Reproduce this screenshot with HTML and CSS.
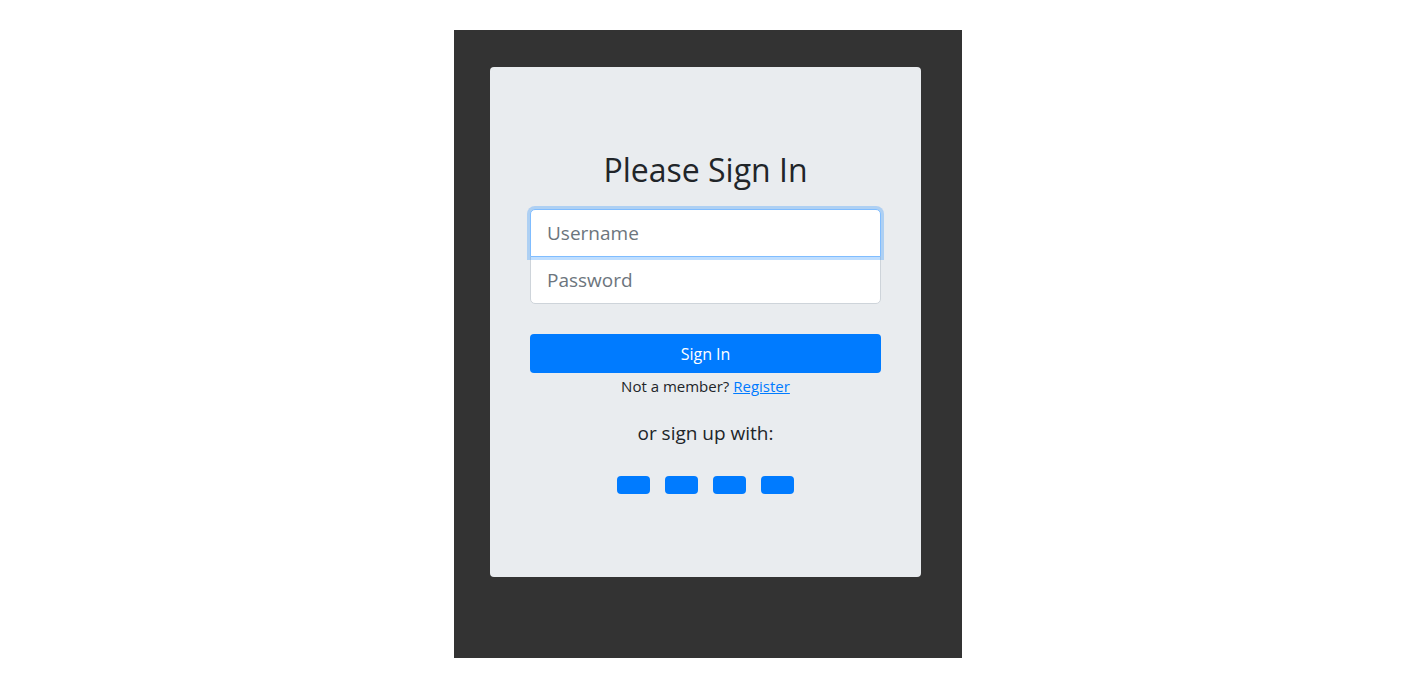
FILE: index.html
```html
<!DOCTYPE html>
<html lang="en">
<head>
    <meta charset="UTF-8">
    <meta name="viewport" content="width=device-width, initial-scale=1.0">
    <title>Sign In</title>
    <link rel="stylesheet" href="styles.css">
</head>
<body>
    <div class="wrapper">
        <form class="signin-card">
            <h2 class="signin-title">Please Sign In</h2>
            <input type="text" class="form-control first" placeholder="Username" autofocus>
            <input type="password" class="form-control last" placeholder="Password">
            <button type="button" class="btn-primary">Sign In</button>
            <p class="member-text">Not a member? <a href="#">Register</a></p>
            <p class="social-text">or sign up with:</p>
            <div class="social-buttons">
                <button type="button" class="social-btn"></button>
                <button type="button" class="social-btn"></button>
                <button type="button" class="social-btn"></button>
                <button type="button" class="social-btn"></button>
            </div>
        </form>
    </div>
</body>
</html>
```

FILE: styles.css
```css
/* Reset */
* {
    margin: 0;
    padding: 0;
    box-sizing: border-box;
}

:root {
    --dark-bg: #333333;
    --card-bg: #e9ecef;
    --primary: #007bff;
    --text-color: #212529;
    --muted: #6c757d;
    --border: #ced4da;
}

body {
    font-family: "Open Sans", "Noto Sans", sans-serif;
    color: var(--text-color);
    background-color: #ffffff;
    padding-top: 30px;
}

.wrapper {
    width: 508px;
    height: 628px;
    margin: 0 auto;
    background-color: var(--dark-bg);
    padding: 37px 41px 0 36px;
}

/* Card */
.signin-card {
    background-color: var(--card-bg);
    border-radius: 4px;
    height: 510px;
    padding: 84px 40px 0;
    display: flex;
    flex-direction: column;
    align-items: stretch;
}

.signin-title {
    font-size: 32px;
    font-weight: 400;
    line-height: 38px;
    text-align: center;
    margin-bottom: 20px;
}

.form-control {
    display: block;
    width: 100%;
    height: 48px;
    padding: 8px 16px;
    font-family: inherit;
    font-size: 19px;
    color: #495057;
    background-color: #ffffff;
    border: 1px solid var(--border);
    outline: none;
}

.form-control::placeholder {
    color: var(--muted);
}

.form-control.first {
    border-radius: 5px 5px 0 0;
    border-color: #80bdff;
    box-shadow: 0 0 0 3px rgba(0, 123, 255, 0.25);
    position: relative;
    z-index: 1;
}

.form-control.last {
    border-radius: 0 0 5px 5px;
    margin-top: -1px;
    height: 48px;
}

.btn-primary {
    margin-top: 30px;
    height: 39px;
    border: none;
    border-radius: 4px;
    background-color: var(--primary);
    color: #ffffff;
    font-family: inherit;
    font-size: 16px;
}

.member-text {
    text-align: center;
    font-size: 15px;
    line-height: 24px;
    margin-top: 1px;
}

.member-text a {
    color: var(--primary);
}

.social-text {
    text-align: center;
    font-size: 19px;
    line-height: 28px;
    margin-top: 21px;
}

.social-buttons {
    display: flex;
    justify-content: center;
    gap: 15px;
    margin-top: 29px;
}

.social-btn {
    width: 33px;
    height: 18px;
    border: none;
    border-radius: 4px;
    background-color: var(--primary);
}
```
